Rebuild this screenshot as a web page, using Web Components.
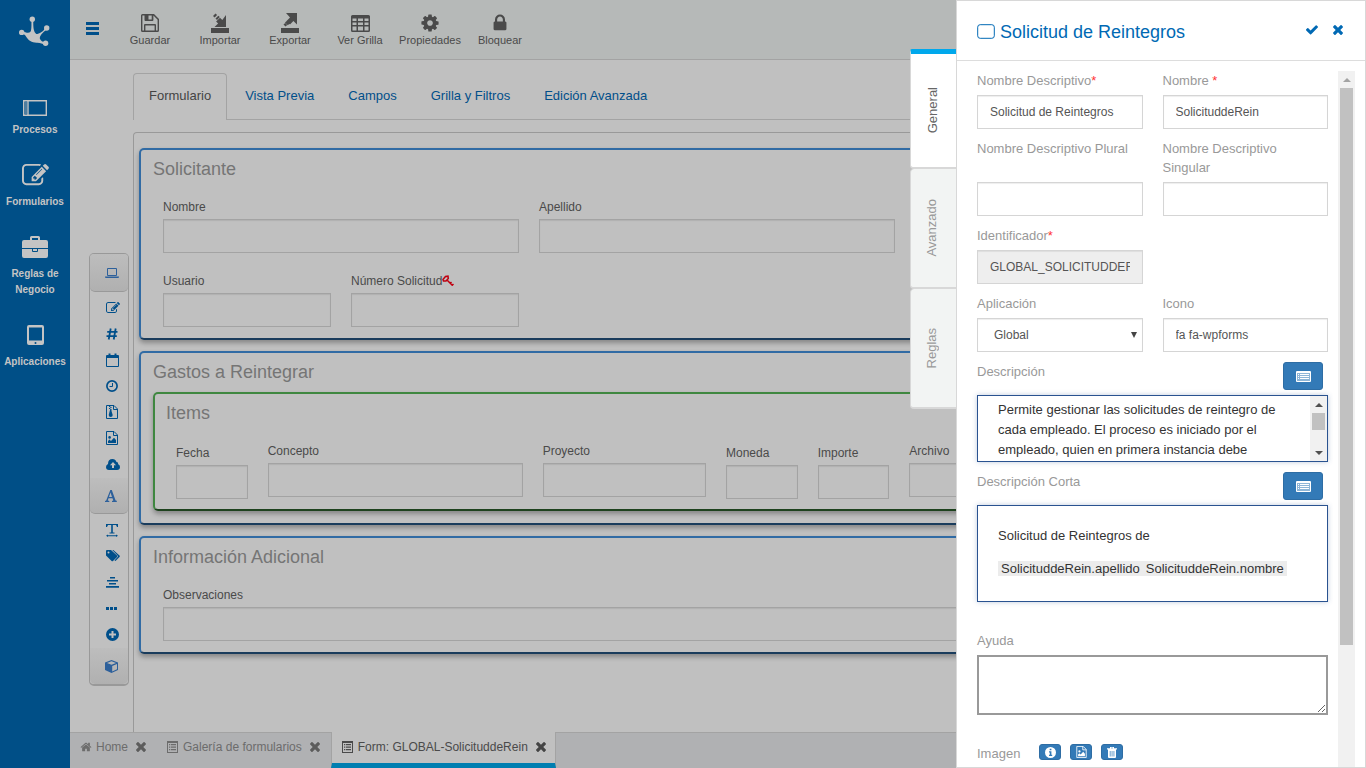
<!DOCTYPE html>
<html lang="es">
<head>
<meta charset="utf-8">
<meta name="viewport" content="width=device-width, initial-scale=1">
<title>Form: GLOBAL-SolicituddeRein</title>
<style>
  html, body { height: 100%; }
  body {
    margin: 0;
    font: 12px/20px "Liberation Sans", Arial, sans-serif;
    color: #4d4d4d;
    background: #c0c0c0;
    overflow: hidden;
    --line: #a3a3a3;
    --link: #004f8a;
  }
</style>
</head>
<body>
<app-shell>
  <side-nav slot="nav">
    <nav-item icon="window">Procesos</nav-item>
    <nav-item icon="edit">Formularios</nav-item>
    <nav-item icon="briefcase">Reglas de Negocio</nav-item>
    <nav-item icon="tablet">Aplicaciones</nav-item>
  </side-nav>

  <tool-bar slot="toolbar">
    <tool-button icon="save">Guardar</tool-button>
    <tool-button icon="import">Importar</tool-button>
    <tool-button icon="export">Exportar</tool-button>
    <tool-button icon="table">Ver Grilla</tool-button>
    <tool-button icon="cog">Propiedades</tool-button>
    <tool-button icon="lock">Bloquear</tool-button>
  </tool-bar>

  <tool-palette slot="palette"></tool-palette>

  <view-tabs slot="tabs">
    <view-tab current>Formulario</view-tab>
    <view-tab>Vista Previa</view-tab>
    <view-tab>Campos</view-tab>
    <view-tab>Grilla y Filtros</view-tab>
    <view-tab>Edición Avanzada</view-tab>
  </view-tabs>

  <form-section heading="Solicitante">
    <form-field span="4" label="Nombre"></form-field>
    <form-field span="4" label="Apellido"></form-field>
    <form-field span="2" label="Usuario" newrow></form-field>
    <form-field span="2" label="Número Solicitud" key></form-field>
  </form-section>

  <form-section heading="Gastos a Reintegrar" nested>
    <form-section heading="Items" tone="green">
      <form-field span="1" label="Fecha" low></form-field>
      <form-field span="3" label="Concepto"></form-field>
      <form-field span="2" label="Proyecto"></form-field>
      <form-field span="1" label="Moneda" low></form-field>
      <form-field span="1" label="Importe" low></form-field>
      <form-field span="4" label="Archivo"></form-field>
    </form-section>
  </form-section>

  <form-section heading="Información Adicional">
    <form-field span="12" label="Observaciones"></form-field>
  </form-section>

  <window-bar slot="windows">
    <window-tab icon="home">Home</window-tab>
    <window-tab icon="list">Galería de formularios</window-tab>
    <window-tab icon="list" current>Form: GLOBAL-SolicituddeRein</window-tab>
  </window-bar>

  <property-drawer slot="drawer" heading="Solicitud de Reintegros">
    <drawer-tab slot="tabs" current>General</drawer-tab>
    <drawer-tab slot="tabs">Avanzado</drawer-tab>
    <drawer-tab slot="tabs">Reglas</drawer-tab>

    <prop-field label="Nombre Descriptivo" required value="Solicitud de Reintegros"></prop-field>
    <prop-field label="Nombre " required value="SolicituddeRein"></prop-field>
    <prop-field label="Nombre Descriptivo Plural"></prop-field>
    <prop-field label="Nombre Descriptivo Singular"></prop-field>
    <prop-field label="Identificador" required locked value="GLOBAL_SOLICITUDDEREIN" alone></prop-field>
    <prop-select label="Aplicación" value="Global"></prop-select>
    <prop-field label="Icono" value="fa fa-wpforms"></prop-field>
    <rich-box label="Descripción" scrolls>Permite gestionar las solicitudes de reintegro de cada empleado. El proceso es iniciado por el empleado, quien en primera instancia debe</rich-box>
    <rich-box label="Descripción Corta"><template-line>Solicitud de Reintegros de</template-line><template-line><field-token>SolicituddeRein.apellido</field-token><field-token>SolicituddeRein.nombre</field-token></template-line></rich-box>
    <prop-area label="Ayuda"></prop-area>
    <image-row label="Imagen"></image-row>
  </property-drawer>
</app-shell>

<script>
/* Icons: [viewBox, markup]; everything paints with currentColor. */
const FA = '0 0 1792 1792';
const ICONS = {
  logo: ['18 16 32 31', '<circle cx="32.3" cy="19.3" r="2.7"/><circle cx="46.7" cy="28" r="2.7"/><circle cx="21.7" cy="32.4" r="2.7"/><circle cx="45.6" cy="43.3" r="2.7"/><path d="M31.4 20h1.900c-.2 7 .2 12 3 14 3 0 7-2.500 9-6l1.300 1.400c-4 3-6.900 6.100-6.800 9.100.7 2.400 3 3.500 5.800 3.900l-.7 2c-2.400-.6-4.200-1.600-7.600-1.700-5 .3-9-2.200-11.300-6.200-1-1.800-2.400-2.800-4.300-3.300l.5-1.800c4.500 1.300 8 2.300 8.800-.9.700-3 .4-7 .4-10.500z"/>'],
  window: ['0 0 24 16', '<path fill="none" stroke="currentColor" stroke-width="1.400" d="M.7.7h22.600v14.600H.7zM5 .7v14.600"/><path opacity=".4" d="M2 2h2v12H2z"/>'],
  edit: [FA, '<path d="M888 1184l116-116-152-152-116 116v56h96v96h56zm440-720q-16-16-33 1l-350 350q-17 17-1 33t33-1l350-350q17-17 1-33zm80 594v190q0 119-84.500 203.500t-203.500 84.500h-832q-119 0-203.500-84.500t-84.500-203.500v-832q0-119 84.500-203.500t203.500-84.500h832q63 0 117 25 15 7 18 23 3 17-9 29l-49 49q-14 14-32 8-23-6-45-6h-832q-66 0-113 47t-47 113v832q0 66 47 113t113 47h832q66 0 113-47t47-113v-126q0-13 9-22l64-64q15-15 35-7t20 29zm-96-738l288 288-672 672h-288v-288zm444 132l-92 92-288-288 92-92q28-28 68-28t68 28l152 152q28 28 28 68t-28 68z"/>'],
  briefcase: ['0 0 26 22', '<path fill-rule="evenodd" d="M8 4V1.500Q8 0 9.500 0h7Q18 0 18 1.500V4h6q2 0 2 2v6H0V6q0-2 2-2zm2 0h6V2h-6zM0 13h10v2q0 1 1 1h4q1 0 1-1v-2h10v7q0 2-2 2H2q-2 0-2-2zm11 0h4v2h-4z"/>'],
  tablet: ['0 0 17 20', '<path fill-rule="evenodd" d="M2 0h13q2 0 2 2v16q0 2-2 2H2q-2 0-2-2V2Q0 0 2 0zm0 2.500v13h13v-13zM8.500 17a1 1 0 100 2 1 1 0 000-2z"/>'],
  bars: ['0 0 13 13', '<path d="M0 0h13v3H0zM0 5h13v3H0zM0 10h13v3H0z"/>'],
  save: ['0 0 18 18', '<path fill-rule="evenodd" d="M1.500 0H13l5 5v11.500q0 1.500-1.500 1.500h-15Q0 18 0 16.500v-15Q0 0 1.500 0zM1.400 1.400v15.200H3V11q0-1 1-1h10q1 0 1 1v5.600h1.600V5.700l-4.200-4.300V6q0 1-1 1H4.500q-1 0-1-1V1.400zM7.500 1.400v4.200h3.200V1.400zM4.400 11.400v5.200h9.200v-5.200z"/>'],
  import: ['0 0 18 20', '<path d="M0 15h18v5H0zM15 2v12H3.500l3.600-3.600-2-2L9 4.800l2.300 2.200zM2 3l2.500-2.500 1.600 1.600-2.500 2.500zM4.500 5.500L7.300 2.700 8.800 4 6 7z"/>'],
  export: ['0 0 18 20', '<path d="M0 15h18v5H0zM16 0v11.500l-3.600-3.500L9 11.400 5.500 8 9 4.500 5 0zM4 9.500L6.200 7.500l2.800 2.800-2.200 2zM2.500 11.500l1.700-1.500 2 2-1.700 1.500z"/>'],
  table: ['0 0 19 17', '<path fill-rule="evenodd" d="M1.500 0h16Q19 0 19 1.500v14q0 1.500-1.500 1.500h-16Q0 17 0 15.500v-14Q0 0 1.500 0zM1.500 3.500V6H5.500V3.500zM7 3.500V6h5V3.500zM13.500 3.500V6h4V3.500zM1.500 7.500V10h4V7.500zM7 7.500V10h5V7.500zM13.500 7.500V10h4V7.500zM1.500 11.500v4h4v-4zM7 11.500v4h5v-4zM13.500 11.500v4h4v-4z"/>'],
  cog: [FA, '<path d="M1152 896q0-106-75-181t-181-75-181 75-75 181 75 181 181 75 181-75 75-181zm512-109v222q0 12-8 23t-20 13l-185 28q-19 54-39 91 35 50 107 138 10 12 10 25t-9 23q-27 37-99 108t-94 71q-12 0-26-9l-138-108q-44 23-91 38-16 136-29 186-7 28-36 28h-222q-14 0-24.500-8.500t-11.500-21.500l-28-184q-49-16-90-37l-141 107q-10 9-25 9-14 0-25-11-126-114-165-168-7-10-7-23 0-12 8-23 15-21 51-66.500t54-70.500q-27-50-41-99l-183-27q-13-2-21-12.500t-8-23.500v-222q0-12 8-23t19-13l186-28q14-46 39-92-40-57-107-138-10-12-10-24 0-10 9-23 26-36 98.500-107.500t94.500-71.500q13 0 26 10l138 107q44-23 91-38 16-136 29-186 7-28 36-28h222q14 0 24.500 8.500t11.500 21.500l28 184q49 16 90 37l142-107q9-9 24-9 13 0 25 10 129 119 165 170 7 8 7 22 0 12-8 23-15 21-51 66.500t-54 70.500q26 50 41 98l183 28q13 2 21 12.500t8 23.500z"/>'],
  lock: [FA, '<path d="M640 768h512v-192q0-106-75-181t-181-75-181 75-75 181v192zm832 96v576q0 40-28 68t-68 28h-960q-40 0-68-28t-28-68v-576q0-40 28-68t68-28h32v-192q0-184 132-316t316-132 316 132 132 316v192h32q40 0 68 28t28 68z"/>'],
  home: [FA, '<path d="M1472 992v480q0 26-19 45t-45 19h-384v-384h-256v384h-384q-26 0-45-19t-19-45v-480q0-1 .5-3t.5-3l575-474 575 474q1 2 1 6zm223-69l-62 74q-8 9-21 11h-3q-13 0-21-7l-692-577-692 577q-12 8-24 7-13-2-21-11l-62-74q-8-10-7-23.500t11-21.500l719-599q32-26 76-26t76 26l244 204v-195q0-14 9-23t23-9h192q14 0 23 9t9 23v408l219 182q10 8 11 21.500t-7 23.500z"/>'],
  times: ['302 302 1188 1188', '<path d="M1490 1322q0 40-28 68l-136 136q-28 28-68 28t-68-28l-294-294-294 294q-28 28-68 28t-68-28l-136-136q-28-28-28-68t28-68l294-294-294-294q-28-28-28-68t28-68l136-136q28-28 68-28t68 28l294 294 294-294q28-28 68-28t68 28l136 136q28 28 28 68t-28 68l-294 294 294 294q28 28 28 68z" transform="translate(0 -64)"/>'],
  check: ['121 320 1550 1250', '<path d="M1671 566q0 40-28 68l-724 724-136 136q-28 28-68 28t-68-28l-136-136-362-362q-28-28-28-68t28-68l136-136q28-28 68-28t68 28l294 295 656-657q28-28 68-28t68 28l136 136q28 28 28 68z"/>'],
  list: ['0 0 11 12', '<path fill-rule="evenodd" d="M0 0h11v12H0zM1 2v9h9V2zM2 3h1.300v1.200H2zM4 3h5v1.200H4zM2 5.500h1.300v1.200H2zM4 5.500h5v1.200H4zM2 8h1.300v1.200H2zM4 8h5v1.200H4z"/>'],
  card: ['0 0 15 11', '<path fill-rule="evenodd" d="M1 0h13q1 0 1 1v9q0 1-1 1H1q-1 0-1-1V1q0-1 1-1zM1 2v8h13V2z"/><path d="M2 3h1v1H2zM4 3h9v1H4zM2 5h1v1H2zM4 5h9v1H4zM2 7h1v1H2zM4 7h9v1H4z"/><path opacity=".45" d="M1 2h13v8H1z"/>'],
  frame: ['0 0 18 15', '<rect x=".7" y=".7" width="16.600" height="13.600" rx="2.500" fill="none" stroke="currentColor"/>'],
  laptop: ['0 0 14 12', '<path fill-rule="evenodd" d="M3 1h8q1 0 1 1v6q0 1-1 1H3Q2 9 2 8V2q0-1 1-1zm0 1v6h8V2zM0 9.500h14v.5q0 1-1 1H1q-1 0-1-1z"/>'],
  hash: ['0 0 12 12', '<path fill="none" stroke="currentColor" stroke-width="1.800" d="M4.700.5l-2 11M9.700.5l-2 11M1.200 3.800h10.300M.5 8.200h10.300"/>'],
  calendar: ['0 0 13 14', '<path fill-rule="evenodd" d="M1 2h1.500V.5h2V2h4V.5h2V2H12q1 0 1 1v10q0 1-1 1H1q-1 0-1-1V3q0-1 1-1zM1 5v8h11V5z"/>'],
  clock: ['0 0 12 12', '<circle cx="6" cy="6" r="5.100" fill="none" stroke="currentColor" stroke-width="1.700"/><path fill="none" stroke="currentColor" d="M6.500 3v3.500h-3"/>'],
  zip: ['0 0 12 14', '<path fill="none" stroke="currentColor" d="M.5.5h7.500l3.500 3.500v9.500H.5zM7.500.5V4.500h4"/><path d="M3 1h1.300v1H3zM4.300 2h1.200v1H4.300zM3 3h1.300v1H3zM4.300 4h1.200v2l1.200 4q0 2-2 2t-2-2l1-4z"/>'],
  image: ['0 0 12 14', '<path fill="none" stroke="currentColor" d="M.5.5h7.500l3.500 3.500v9.500H.5zM7.500.5V4.500h4"/><circle cx="3.600" cy="6.400" r="1.300"/><path d="M2 12v-2l1.500-1.500L5 10l3-3.200L10 9v3z"/>'],
  cloud: ['0 0 14 11', '<path fill-rule="evenodd" d="M3 11Q0 11 0 8q0-2 2-3Q2 0 6.500 0q3 0 4 3 2 0 1.700 2.300Q14 6 14 8q0 3-3 3zM7 3L4 6.200h2V9h2V6.200h2z"/>'],
  serif: ['0 0 12 12', '<path d="M5.300 0h1.500l3.800 10.500 1.200.3V12H7v-1.100l1.300-.3-.8-2.300h-4l-.7 2.300 1.500.3V12H0v-1.100l1.200-.4zM4 7h3L5.500 2.600z"/>'],
  textwidth: ['0 0 12 13', '<path d="M0 0h12v3h-1L10 1H6.800v7.500h1.700v.9h-5v-.9h1.700V1H2L1 3H0zM2 10.500v.7h8v-.7l2 1.200-2 1.300v-.7H2v.7L0 11.700z"/>'],
  tags: ['0 0 14 12', '<path fill-rule="evenodd" d="M0 1q0-1 1-1h4l6 5.500q.7.7 0 1.400L7 11q-.7.700-1.400 0L0 5.500zm2.500.5a1 1 0 100 2 1 1 0 000-2zM6.300 0h1L13.500 5.500q.7.7 0 1.400L9.500 11l-1-.4 3.700-4.400z"/>'],
  center: ['0 0 13 11', '<path d="M4 0h5v1.500H4zM1 3h11v1.500H1zM3 6h7v1.500H3zM0 9h13v1.800H0z"/>'],
  dots: ['0 0 11 3', '<path d="M0 0h3v3H0zM4 0h3v3H4zM8 0h3v3H8z"/>'],
  plus: ['0 0 13 13', '<path fill-rule="evenodd" d="M6.500 0a6.500 6.500 0 100 13 6.500 6.500 0 000-13zM5.500 3h2v2.500H10v2H7.500V10h-2V7.500H3v-2h2.500z"/>'],
  cube: ['0 0 13 13', '<path fill-rule="evenodd" d="M6.500 0L13 2.500v7.500L6.500 13 0 10V2.500zM6.500 1.200L2 3l4.500 1.700L11 3zM7.200 6v5.400L12 9.300V4z"/>'],
  key: ['0 0 12 12', '<path fill="none" stroke="currentColor" stroke-width="1.500" d="M1 4.500L3.500 1.500 6 1.200 6.300 3.500 4 6 1.500 6zM5.500 5.500l5 5M8 8.500l1.500-1.500M10 10.500l1.500-1.500"/>'],
  info: ['0 0 11 11', '<path fill-rule="evenodd" d="M5.500 0a5.500 5.500 0 100 11 5.500 5.500 0 000-11zM4.700 1.700h1.700v1.500H4.700zM4 4.300h2.400v3.500h.8V9H4V7.800h.8V5.500H4z"/>'],
  trash: ['0 0 10 11', '<path fill-rule="evenodd" d="M3 1.300V0h4v1.300h3v1.300H9V10q0 1-1 1H2q-1 0-1-1V2.600H0V1.300zM4 .8v.5h2V.8zM2.800 4v5.500h.7V4zM4.700 4v5.500h.7V4zM6.600 4v5.500h.7V4z"/>'],
};

/* Base element: open shadow root filled from a template. */
class Base extends HTMLElement {
  constructor() {
    super();
    this.attachShadow({ mode: 'open' });
  }
  connectedCallback() {
    if (this.shadowRoot.childNodes.length) return;
    const t = document.createElement('template');
    t.innerHTML = `<style>:host,*{box-sizing:border-box}${this.css()}</style>${this.html()}`;
    this.shadowRoot.append(t.content.cloneNode(true));
  }
  css() { return ''; }
  html() { return '<slot></slot>'; }
  at(name) { return this.getAttribute(name) || ''; }
}
const define = (name, css, html) => customElements.define(name, class extends Base {
  css() { return typeof css === 'function' ? css(this) : css; }
  html() { return html ? html(this) : '<slot></slot>'; }
});

define('ui-icon',
  e => `:host{display:inline-flex;flex:none} svg{display:block;width:${e.at('w')}px;height:${e.at('h')}px;fill:currentColor}`,
  e => { const [box, body] = ICONS[e.at('name')]; return `<svg viewBox="${box}" aria-hidden="true">${body}</svg>`; });

/* Page frame */
define('app-shell', `
  :host{display:grid;grid-template-columns:70px minmax(0,1fr);height:100vh;position:relative;overflow:hidden}
  .main{display:flex;flex-direction:column;min-width:0;min-height:0}
  .work{flex:1;display:grid;grid-template-columns:63px minmax(0,1fr);padding-right:66px;min-height:0}
  .desk{display:flex;flex-direction:column;padding-top:13px;min-height:0}
  .canvas{flex:1;margin-top:12px;padding:15px 5px 0;display:flex;flex-direction:column;gap:11px;border:1px solid #999;border-bottom:0;border-radius:4px 4px 0 0;overflow:hidden}`,
  () => `<slot name="nav"></slot>
  <div class="main"><slot name="toolbar"></slot>
    <div class="work"><slot name="palette"></slot>
      <div class="desk"><slot name="tabs"></slot><main class="canvas"><slot></slot></main></div>
    </div><slot name="windows"></slot>
  </div><slot name="drawer"></slot>`);

define('side-nav', `
  :host{display:block;background:#004f87;color:#c4c4c4}
  .logo{display:flex;justify-content:center;padding:16px 2px 43px 0}
  nav{display:flex;flex-direction:column;gap:24px}`,
  () => `<div class="logo"><ui-icon name="logo" w="32" h="31"></ui-icon></div><nav><slot></slot></nav>`);

const NAV_SIZE = { window: [24, 16], edit: [27, 27], briefcase: [26, 22], tablet: [17, 20] };
define('nav-item', e => `
  :host{display:block}
  a{display:flex;flex-direction:column;align-items:center;gap:6px;color:inherit;text-decoration:none;text-align:center;font-weight:bold;font-size:10px;line-height:16px}
  .pic{height:26px;display:flex;align-items:${e.at('icon') === 'window' ? 'flex-end' : 'center'}}
  span{max-width:64px}`,
  e => { const [w, h] = NAV_SIZE[e.at('icon')]; return `<a href="#"><div class="pic"><ui-icon name="${e.at('icon')}" w="${w}" h="${h}"></ui-icon></div><span><slot></slot></span></a>`; });

define('tool-bar', `
  :host{display:flex;height:60px;background:#b6b9b8;border-bottom:1px solid var(--line)}
  .menu{width:45px;padding:22px 0 0;border:0;background:none;color:var(--link);display:flex;align-items:flex-start;justify-content:center}`,
  () => `<button class="menu" aria-label="Menú"><ui-icon name="bars" w="13" h="13"></ui-icon></button><slot></slot>`);

const TOOL_SIZE = { save: [18, 18], import: [18, 20], export: [18, 20], table: [19, 17], cog: [20, 20], lock: [20, 20] };
define('tool-button', `
  :host{display:block;width:70px}
  button{width:100%;padding:13px 0 0;border:0;background:none;font:11px/14px "Liberation Sans",Arial,sans-serif;color:#4a4a4a;display:flex;flex-direction:column;align-items:center}
  .pic{height:20px;display:flex;align-items:center}
  span{white-space:nowrap}`,
  e => { const [w, h] = TOOL_SIZE[e.at('icon')]; return `<button><div class="pic"><ui-icon name="${e.at('icon')}" w="${w}" h="${h}"></ui-icon></div><span><slot></slot></span></button>`; });

/* Palette of field types */
define('tool-palette', `
  :host{display:block;padding:193px 0 0 19px}
  .box{width:40px;border:1px solid #999;border-bottom-width:2px;border-radius:5px;overflow:hidden;color:var(--link)}
  button{display:flex;align-items:center;width:100%;height:26px;padding:0 0 0 16px;border:0;background:none;color:inherit}
  .head{height:36px;padding-left:15px;background:linear-gradient(#bdbdbd,#b0b0b0);border-bottom:1px solid #999;border-radius:0 0 5px 5px;color:#2d609b}
  .head.first{height:38px}
  .head.last{border-bottom:0}
  .group{padding:3px 0 1px}`,
  () => {
    const b = (n, w, h, t, c = '') => `<button class="${c}" aria-label="${t}"><ui-icon name="${n}" w="${w}" h="${h}"></ui-icon></button>`;
    return `<div class="box">${b('laptop', 14, 12, 'Contenido', 'head first')}
    <div class="group">${b('edit', 14, 14, 'Texto')}${b('hash', 12, 12, 'Número')}${b('calendar', 13, 14, 'Fecha')}${b('clock', 12, 12, 'Hora')}${b('zip', 12, 14, 'Archivo')}${b('image', 12, 14, 'Imagen')}${b('cloud', 14, 11, 'Nube')}</div>
    ${b('serif', 12, 12, 'Diseño', 'head')}
    <div class="group">${b('textwidth', 12, 13, 'Título')}${b('tags', 14, 12, 'Etiqueta')}${b('center', 13, 11, 'Separador')}${b('dots', 11, 3, 'Espacio')}${b('plus', 13, 13, 'Agregar')}</div>
    ${b('cube', 13, 13, 'Contenedores', 'head last')}</div>`;
  });

define('view-tabs', `
  :host{display:block}
  nav{display:flex;gap:2px;box-shadow:inset 0 -1px var(--line)}`,
  () => `<nav><slot></slot></nav>`);
define('view-tab', `
  :host{display:block}
  a{display:block;padding:11px 15px 14px;border:1px solid transparent;border-bottom:0;border-radius:4px 4px 0 0;font-size:13px;line-height:21px;color:var(--link);text-decoration:none}
  :host([current]) a{color:#444;background:#c0c0c0;border-color:var(--line)}`,
  () => `<a href="#"><slot></slot></a>`);

define('form-section', `
  :host{display:block;border:2px solid #316ba4;border-bottom-color:#1a3c5c;border-radius:5px;padding:0 11px 11px 12px;box-shadow:0 3px 5px rgba(0,0,0,.3)}
  :host([nested]){padding-bottom:12px}
  :host([tone=green]){border-color:#3f8740;border-bottom-color:#1e421e;padding:0 13px 10px 11px;margin-top:1px}
  h2{margin:0 0 9px;font-size:18px;line-height:38px;font-weight:normal;color:#757575}
  .grid{display:grid;grid-template-columns:repeat(12,minmax(0,1fr));row-gap:18px}
  :host([nested]) h2{margin-bottom:0}
  :host([nested]) .grid{display:block}`,
  e => `<h2>${e.at('heading')}</h2><div class="grid"><slot></slot></div>`);

define('form-field', e => `
  :host{display:block;grid-column:${e.hasAttribute('newrow') ? '1 / ' : ''}span ${e.at('span')};padding:0 10px}
  :host([low]){padding-top:2px}
  label{display:flex;align-items:center;height:20px;white-space:nowrap;color:#4a4a4a}
  input{display:block;width:100%;height:34px;margin-top:2px;padding:6px 12px;border:1px solid var(--line);background:transparent;box-shadow:inset 0 1px 1px rgba(0,0,0,.08);font:inherit}
  ui-icon{color:#c00010}`,
  e => `<label for="f">${e.at('label')}${e.hasAttribute('key') ? '<ui-icon name="key" w="12" h="12"></ui-icon>' : ''}</label><input id="f" type="text">`);

/* Open windows strip */
define('window-bar', `:host{display:flex;height:36px;background:#b0b1b3;border-top:1px solid var(--line)}`);
define('window-tab', e => `
  :host{display:flex;align-items:center;padding:0 11px 7px 10px;color:#6c6c6c}
  :host([current]){margin-top:-1px;padding:1px 9px 2px 10px;border:1px solid var(--line);border-top:0;border-bottom:5px solid #007eb0;background:#c0c0c0;color:#4a4a4a}
  a{display:flex;align-items:center;gap:${e.at('icon') === 'home' ? 4 : 5}px;color:inherit;text-decoration:none;white-space:nowrap}
  button{display:flex;padding:0;margin-left:8px;border:0;background:none;color:#5c5c5c}
  :host([current]) button{color:#444}`,
  e => `<a href="#"><ui-icon name="${e.at('icon')}" w="${e.at('icon') === 'home' ? 12 : 11}" h="12"></ui-icon><slot></slot></a><button aria-label="Cerrar"><ui-icon name="times" w="10" h="10"></ui-icon></button>`);

/* Scroll track drawn in flow next to scrolled content */
define('scroll-rail', e => `
  :host{display:flex;flex-direction:column;flex:none;width:17px;background:#f1f1f1}
  .arrow{flex:none;height:17px;display:flex;align-items:center;justify-content:center}
  .up::before,.down::before{content:"";border:4px solid transparent}
  .up::before{border-top:0;border-bottom-color:${e.hasAttribute('start') ? '#a3a3a3' : '#505050'}}
  .down::before{border-bottom:0;border-top-color:#505050}
  :host([start]) .down{display:none}
  .track{flex:1;display:flex;flex-direction:column;align-items:center}
  .thumb{width:13px;height:${e.at('size')};background:#c1c1c1}`,
  () => `<div class="arrow up"></div><div class="track"><div class="thumb"></div></div><div class="arrow down"></div>`);

/* Property drawer */
define('property-drawer', `
  :host{position:absolute;top:0;right:0;bottom:0;display:flex;pointer-events:none}
  .tabs{width:46px;padding-top:49px}
  .tabs,section{pointer-events:auto}
  section{width:410px;display:flex;flex-direction:column;background:#fff;border:1px solid #d8d8d8}
  header{display:flex;align-items:center;height:60px;padding:2px 22px 0 20px;border-bottom:1px solid #ddd;color:#0069b4}
  h1{flex:1;margin:0 0 0 5px;font-size:18px;line-height:24px;font-weight:normal}
  header button{display:flex;padding:0 0 3px;margin-left:15px;border:0;background:none;color:#0069b4}
  .body{flex:1;display:flex;min-height:0;padding:10px 10px 0 20px;gap:10px}
  .scroll{flex:1;overflow:hidden;margin:0 -5px;padding:0 5px;display:grid;grid-template-columns:repeat(2,minmax(0,1fr));gap:10px 20px;align-content:start}`,
  e => `<div class="tabs"><slot name="tabs"></slot></div>
  <section><header><ui-icon name="frame" w="18" h="15"></ui-icon><h1>${e.at('heading')}</h1>
    <button aria-label="Aceptar"><ui-icon name="check" w="12" h="10"></ui-icon></button><button aria-label="Cerrar"><ui-icon name="times" w="10" h="10"></ui-icon></button></header>
    <div class="body"><div class="scroll"><slot></slot></div><scroll-rail size="82%" start></scroll-rail></div></section>`);

define('drawer-tab', `
  :host{display:block;height:120px}
  button{display:flex;align-items:center;justify-content:center;width:100%;height:100%;padding:0 3px 0 0;border:1px solid #d8d8d8;border-width:0 0 2px 1px;border-radius:4px 0 0 4px;background:#f2f4f3;color:#999;font:13px/20px "Liberation Sans",Arial,sans-serif}
  span{writing-mode:vertical-rl;transform:rotate(180deg)}
  :host([current]){margin-right:-1px}
  :host([current]) button{background:#fff;color:#666;border-top:5px solid #00a8ec;border-top-left-radius:2px}`,
  () => `<button><span><slot></slot></span></button>`);

const LABEL = `label,.label{display:block;font-size:13px;line-height:19px;color:#999}i{font-style:normal;color:#f33}`;
const CONTROL = `width:100%;height:34px;border:1px solid #d5d5d5;border-radius:0;font:12px/20px "Liberation Sans",Arial,sans-serif;color:#555;background:#fff;box-shadow:inset 0 1px 1px rgba(0,0,0,.07)`;
const star = e => e.hasAttribute('required') ? '<i>*</i>' : '';

define('prop-field', `
  :host{display:flex;flex-direction:column;justify-content:space-between;gap:5px}
  :host([alone]){grid-column:1}
  ${LABEL}
  label{padding-right:8px}
  input{${CONTROL};padding:6px 12px}
  input:disabled{background:#eee;opacity:1}`,
  e => `<label for="f">${e.at('label')}${star(e)}</label><input id="f" type="text" value="${e.at('value')}"${e.hasAttribute('locked') ? ' disabled' : ''}>`);

define('prop-select', `
  :host{display:flex;flex-direction:column;gap:5px;grid-column:1}
  ${LABEL}
  .wrap{display:grid}
  .wrap>*{grid-area:1/1}
  select{${CONTROL};padding:6px 16px;appearance:none}
  .wrap::after{content:"";grid-area:1/1;justify-self:end;align-self:center;margin-right:6px;border:3px solid transparent;border-top:6px solid #444;border-bottom:0;pointer-events:none}`,
  e => `<label for="f">${e.at('label')}</label><div class="wrap"><select id="f"><option>${e.at('value')}</option></select></div>`);

define('rich-box', `
  :host{display:block;grid-column:1/-1}
  .top{display:flex;justify-content:space-between;align-items:flex-start;height:28px;margin-bottom:5px;padding-right:5px}
  ${LABEL}
  button{display:flex;align-items:center;justify-content:center;width:40px;height:28px;padding:0;border:1px solid #2e6da4;border-radius:3px;background:#337ab7;color:#fff}
  .box{display:flex;border:1px solid #2a5390;box-shadow:0 0 5px rgba(42,83,144,.3);font-size:13px;line-height:20px;color:#333;background:#fff}
  .text{flex:1;min-width:0;padding:19px 20px 10px;outline:0;height:95px}
  :host([scrolls]) .box{height:67px}
  :host([scrolls]) .text{padding:4px 20px 0;height:65px;overflow:hidden}`,
  e => `<div class="top"><div class="label" id="l">${e.at('label')}</div><button aria-label="Editar"><ui-icon name="card" w="15" h="11"></ui-icon></button></div>
  <div class="box"><div class="text" role="textbox" aria-multiline="true" aria-labelledby="l" contenteditable="true"><slot></slot></div>${e.hasAttribute('scrolls') ? '<scroll-rail size="54%"></scroll-rail>' : ''}</div>`);
define('template-line', `:host{display:flex;height:20px;margin-bottom:13px;align-items:center;line-height:15px;white-space:nowrap;margin-right:-20px}`);
define('field-token', `:host{display:block;background:#ececec;padding:0 3px}`);

define('prop-area', `
  :host{display:block;grid-column:1/-1;padding-top:19px}
  ${LABEL}
  textarea{display:block;width:100%;height:60px;margin-top:5px;padding:4px;border:2px solid #999;background:#fff;resize:both;font:13px/20px "Liberation Sans",Arial,sans-serif}`,
  e => `<label for="f">${e.at('label')}</label><textarea id="f"></textarea>`);

define('image-row', `
  :host{display:flex;align-items:flex-start;grid-column:1/-1;gap:9px;padding-top:19px}
  ${LABEL}
  .label{width:53px}
  button{display:flex;align-items:center;justify-content:center;width:22px;height:16px;padding:0;border:1px solid #2e6da4;border-radius:3px;background:#337ab7;color:#fff}`,
  e => `<div class="label">${e.at('label')}</div><button aria-label="Información"><ui-icon name="info" w="11" h="11"></ui-icon></button><button aria-label="Elegir imagen"><ui-icon name="image" w="11" h="12"></ui-icon></button><button aria-label="Eliminar"><ui-icon name="trash" w="10" h="11"></ui-icon></button>`);
</script>
</body>
</html>
